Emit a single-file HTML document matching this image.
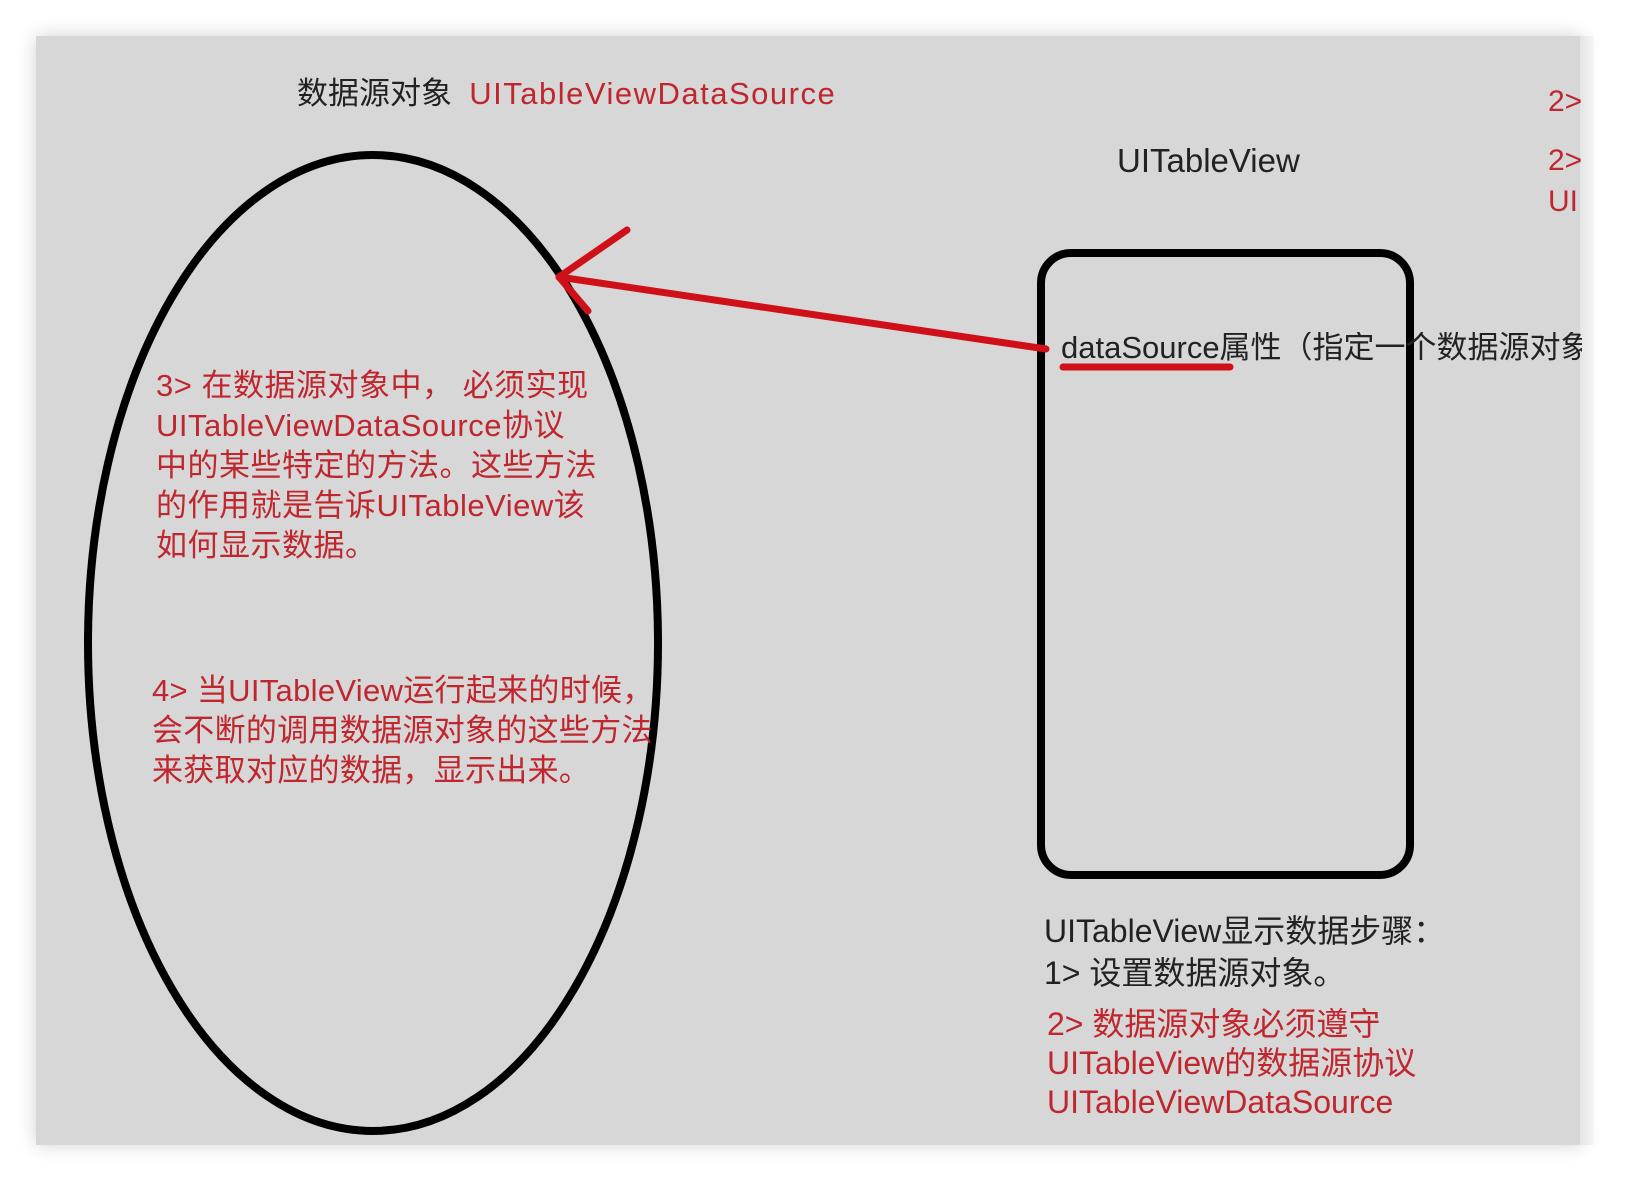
<!DOCTYPE html>
<html><head><meta charset="utf-8"><style>
html,body{margin:0;padding:0;width:1632px;height:1180px;background:#fff;overflow:hidden}
.panel{position:absolute;left:36px;top:36px;width:1546px;height:1109px;background:#d7d7d7;box-shadow:0 0 18px rgba(0,0,0,0.18)}
.edge{position:absolute;left:1580px;top:36px;width:14px;height:1109px;background:linear-gradient(90deg,#e4e4e4,#f6f6f6)}
.t{position:absolute;font-family:"Liberation Sans","Noto Sans CJK SC",sans-serif;white-space:nowrap;line-height:1;color:#222}
.r{color:#c0262e}
</style></head><body>
<div class="panel"></div>
<div class="edge"></div>
<svg width="1632" height="1180" style="position:absolute;left:0;top:0">
<ellipse cx="373" cy="643" rx="285" ry="488" fill="none" stroke="#000" stroke-width="8"/>
<rect x="1041" y="253" width="369" height="622" rx="30" fill="none" stroke="#000" stroke-width="8"/>
<g stroke="#d01018" stroke-width="7" stroke-linecap="round" fill="none">
<line x1="1046" y1="349" x2="559" y2="277"/>
<line x1="559" y1="277" x2="627" y2="230"/>
<line x1="559" y1="277" x2="588" y2="311"/>
<line x1="1063" y1="367" x2="1230" y2="367"/>
</g>
</svg>
<div class="t" style="left:297px;top:78px;font-size:31px">数据源对象&nbsp;&nbsp;<span class="r" style="letter-spacing:1.5px">UITableViewDataSource</span></div>
<div class="t" style="left:1117px;top:144px;font-size:33px">UITableView</div>
<div class="t r" style="left:1548px;top:87px;font-size:30px">2&gt;</div>
<div class="t r" style="left:1548px;top:146px;font-size:30px">2&gt;</div>
<div class="t r" style="left:1548px;top:187px;font-size:30px">UI</div>
<div class="t" style="left:1061px;top:332px;font-size:31px;width:521px;overflow:hidden">dataSource属性（指定一个数据源对象）</div>
<div class="t r" style="left:156px;top:366px;font-size:31px;line-height:40px;white-space:normal;width:560px;letter-spacing:0.5px">3&gt; 在数据源对象中， 必须实现<br>UITableViewDataSource协议<br>中的某些特定的方法。这些方法<br>的作用就是告诉UITableView该<br>如何显示数据。</div>
<div class="t r" style="left:152px;top:671px;font-size:31px;line-height:40px;white-space:normal;width:600px;letter-spacing:0.3px">4&gt; 当UITableView运行起来的时候，<br>会不断的调用数据源对象的这些方法<br>来获取对应的数据，显示出来。</div>
<div class="t" style="left:1044px;top:910px;font-size:32px;line-height:42px">UITableView显示数据步骤：<br>1&gt; 设置数据源对象。</div>
<div class="t r" style="left:1047px;top:1005px;font-size:32px;line-height:39px">2&gt; 数据源对象必须遵守<br>UITableView的数据源协议<br>UITableViewDataSource</div>
</body></html>
